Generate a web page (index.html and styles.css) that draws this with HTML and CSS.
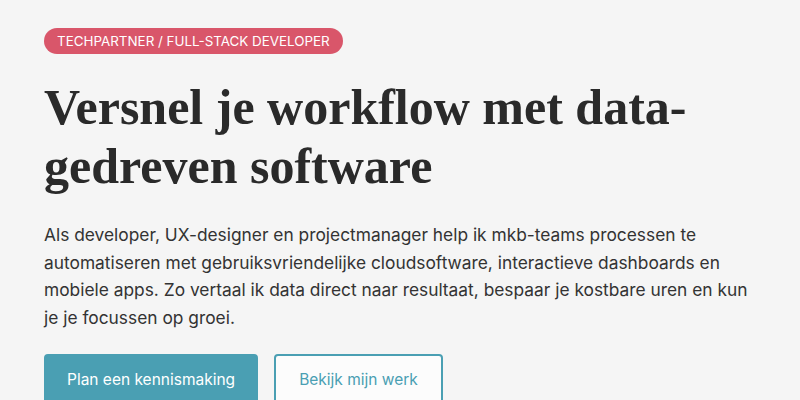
FILE: index.html
```html
<!DOCTYPE html>
<html lang="nl">
<head>
  <meta charset="UTF-8">
  <title>Techpartner / Full-stack developer</title>
  <link rel="stylesheet" href="styles.css">
</head>
<body>

<section class="hero">
  <span class="badge">Techpartner / Full-stack developer</span>
  <h1>Versnel je workflow met data-gedreven software</h1>
  <p class="lead">Als developer, UX-designer en projectmanager help ik mkb-teams processen te automatiseren met gebruiksvriendelijke cloudsoftware, interactieve dashboards en mobiele apps. Zo vertaal ik data direct naar resultaat, bespaar je kostbare uren en kun je je focussen op groei.</p>
  <div class="actions">
    <a href="#contact" class="btn btn-primary">Plan een kennismaking</a>
    <a href="#werk" class="btn btn-outline">Bekijk mijn werk</a>
  </div>
</section>

</body>
</html>
```

FILE: styles.css
```css
body {
  margin: 0;
  background: #f5f5f5;
  font-family: Inter, "Noto Sans", sans-serif;
  color: #333;
}
.hero {
  padding: 28px 44px 0;
  max-width: 720px;
}
.badge {
  display: inline-block;
  background: #d9566a;
  color: #fff;
  font-size: 13.4px;
  line-height: 26px;
  padding: 0 13px;
  border-radius: 13px;
  text-transform: uppercase;
}
h1 {
  font-family: "Liberation Serif", "DejaVu Serif", serif;
  font-weight: bold;
  font-size: 50px;
  line-height: 59px;
  color: #2a2a2a;
  margin: 24px 0 25px;
}
.lead {
  font-size: 17.35px;
  line-height: 27.5px;
  margin: 0 0 23px;
}
.actions {
  display: flex;
  gap: 16px;
}
.btn {
  display: inline-block;
  font-size: 15.5px;
  line-height: 20px;
  padding: 14px 21px;
  border-radius: 4px;
  text-decoration: none;
}
.btn-primary {
  background: #4a9fb3;
  color: #fff;
  border: 2px solid #4a9fb3;
}
.btn-outline {
  padding: 14px 23px;
  background: #fcfcfc;
  color: #4a9fb3;
  border: 2px solid #4a9fb3;
}
```
